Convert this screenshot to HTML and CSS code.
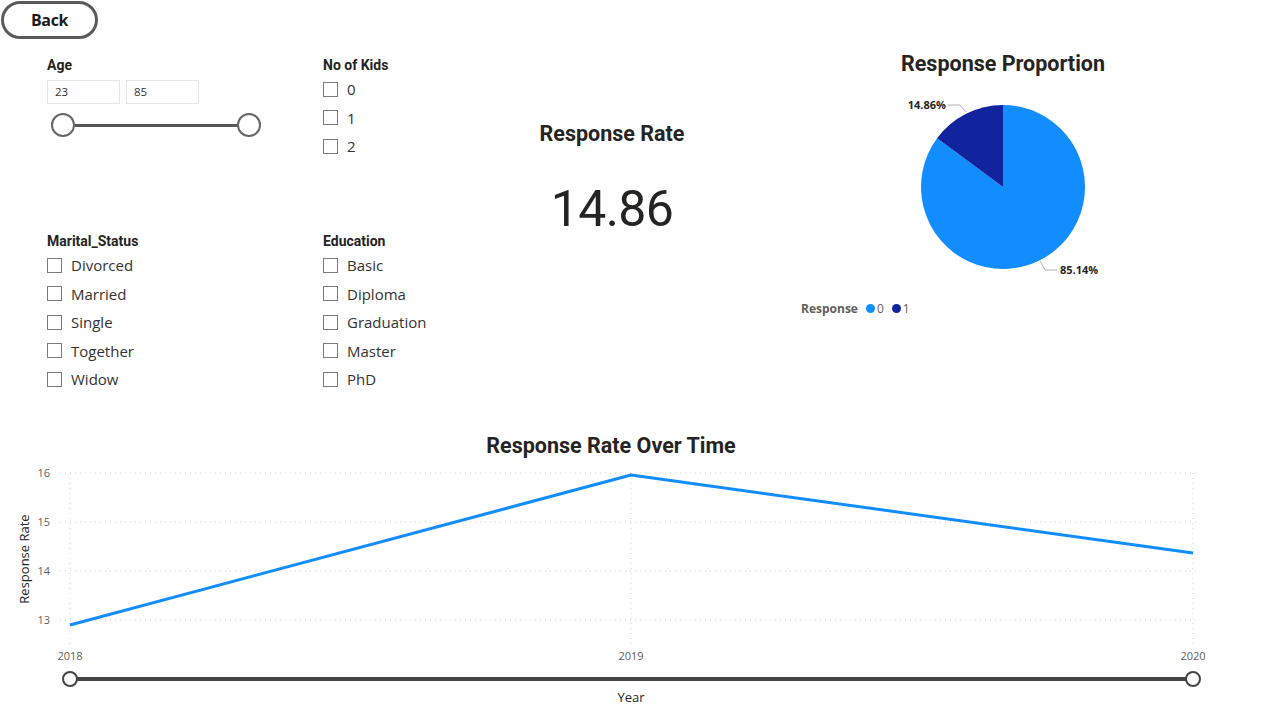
FILE: index.html
```html
<!DOCTYPE html>
<html lang="en">
<head>
<meta charset="utf-8">
<title>Response Dashboard</title>
<link rel="stylesheet" href="styles.css">
</head>
<body>
<div class="page">
  <header class="toolbar">
    <button class="back">Back</button>
  </header>

  <section class="top">
    <div class="filters">
      <div class="slicer">
        <div class="slicer-title">Age</div>
        <div class="range-inputs">
          <div class="range-box">23</div>
          <div class="range-box">85</div>
        </div>
        <div class="range-slider">
          <span class="knob"></span>
          <span class="track"></span>
          <span class="knob"></span>
        </div>
      </div>

      <div class="slicer">
        <div class="slicer-title">No of Kids</div>
        <ul class="checklist">
          <li><span class="box"></span>0</li>
          <li><span class="box"></span>1</li>
          <li><span class="box"></span>2</li>
        </ul>
      </div>

      <div class="slicer">
        <div class="slicer-title">Marital_Status</div>
        <ul class="checklist">
          <li><span class="box"></span>Divorced</li>
          <li><span class="box"></span>Married</li>
          <li><span class="box"></span>Single</li>
          <li><span class="box"></span>Together</li>
          <li><span class="box"></span>Widow</li>
        </ul>
      </div>

      <div class="slicer">
        <div class="slicer-title">Education</div>
        <ul class="checklist">
          <li><span class="box"></span>Basic</li>
          <li><span class="box"></span>Diploma</li>
          <li><span class="box"></span>Graduation</li>
          <li><span class="box"></span>Master</li>
          <li><span class="box"></span>PhD</li>
        </ul>
      </div>
    </div>

    <div class="card">
      <h2 class="visual-title">Response Rate</h2>
      <div class="card-value">14.86</div>
    </div>

    <div class="pie-visual">
      <h2 class="visual-title">Response Proportion</h2>
      <svg class="pie" width="404" height="210" viewBox="0 0 404 210">
        <path d="M202,107 L136.1,58.2 A82,82 0 1 0 202,25 Z" fill="#118DFF"/>
        <path d="M202,107 L202,25 A82,82 0 0 0 136.1,58.2 Z" fill="#12239E"/>
        <polyline points="147,25 159,25 165,32" fill="none" stroke="#b3b3b3" stroke-width="1"/>
        <polyline points="239,181 244,190 256,190" fill="none" stroke="#b3b3b3" stroke-width="1"/>
        <text class="pie-label" x="145" y="29" text-anchor="end">14.86%</text>
        <text class="pie-label" x="259" y="194">85.14%</text>
      </svg>
      <div class="legend">
        <span class="legend-title">Response</span>
        <span class="legend-item"><span class="dot light"></span>0</span>
        <span class="legend-item"><span class="dot dark"></span>1</span>
      </div>
    </div>
  </section>

  <section class="trend">
    <h2 class="visual-title">Response Rate Over Time</h2>
    <svg class="line-chart" width="1262" height="250" viewBox="0 460 1262 250">
      <g class="grid">
        <line x1="60" y1="473" x2="1200" y2="473"/>
        <line x1="60" y1="522" x2="1200" y2="522"/>
        <line x1="60" y1="571" x2="1200" y2="571"/>
        <line x1="60" y1="620" x2="1200" y2="620"/>
        <line x1="70" y1="473" x2="70" y2="648"/>
        <line x1="631" y1="473" x2="631" y2="648"/>
        <line x1="1193" y1="473" x2="1193" y2="648"/>
      </g>
      <g class="ytick">
        <text x="50" y="477">16</text>
        <text x="50" y="526">15</text>
        <text x="50" y="575">14</text>
        <text x="50" y="624">13</text>
      </g>
      <text class="axis-title" transform="translate(29,559) rotate(-90)">Response Rate</text>
      <polyline class="series" points="70,625 631,475 1193,553"/>
      <g class="xtick">
        <text x="70" y="660">2018</text>
        <text x="631" y="660">2019</text>
        <text x="1193" y="660">2020</text>
      </g>
      <line class="range-track" x1="70" y1="679" x2="1193" y2="679"/>
      <circle class="range-knob" cx="70" cy="679" r="7"/>
      <circle class="range-knob" cx="1193" cy="679" r="7"/>
      <text class="axis-title" x="631" y="702" text-anchor="middle">Year</text>
    </svg>
  </section>
</div>
</body>
</html>
```

FILE: styles.css
```css
* {
  box-sizing: border-box;
}

html, body {
  margin: 0;
  padding: 0;
  background: #ffffff;
}

body {
  width: 1262px;
  height: 720px;
  overflow: hidden;
  font-family: "Open Sans", "Noto Sans", sans-serif;
  color: #252423;
}

.page {
  display: flex;
  flex-direction: column;
}

.toolbar {
  height: 40px;
  padding: 1px 0 0 1px;
}

.back {
  width: 97px;
  height: 38px;
  border: 3px solid #5b5b5b;
  border-radius: 19px;
  background: #ffffff;
  font-family: "Open Sans", sans-serif;
  font-weight: 700;
  font-size: 16px;
  color: #1b1b1b;
  padding: 0;
  letter-spacing: -0.4px;
}

.top {
  display: flex;
  height: 394px;
}

.filters {
  margin-left: 47px;
  margin-top: 17px;
  display: grid;
  grid-template-columns: 276px 140px;
  grid-template-rows: 176px auto;
  align-self: flex-start;
}

.slicer-title {
  font-family: "Roboto", sans-serif;
  font-weight: 700;
  font-size: 14px;
  line-height: 16px;
  height: 16px;
  color: #252423;
}

.range-inputs {
  display: flex;
  gap: 6px;
  margin-top: 7px;
}

.range-box {
  width: 73px;
  height: 24px;
  border: 1px solid #e6e6e6;
  font-size: 11.5px;
  line-height: 22px;
  padding-left: 7px;
  color: #333;
}

.range-slider {
  display: flex;
  align-items: center;
  margin-top: 9px;
  margin-left: 4px;
  width: 210px;
}

.knob {
  width: 24px;
  height: 24px;
  border-radius: 50%;
  border: 2px solid #666;
  background: #fff;
  flex: none;
}

.track {
  flex: 1;
  height: 3px;
  background: #575757;
}

.checklist {
  list-style: none;
  margin: 2px 0 0 0;
  padding: 0;
}

.checklist li {
  display: flex;
  align-items: center;
  height: 28.5px;
  font-size: 15px;
  color: #333;
  gap: 9px;
}

.box {
  width: 15px;
  height: 15px;
  border: 1px solid #7a7a7a;
  background: #fff;
  flex: none;
}

.visual-title {
  margin: 0;
  font-family: "Roboto", sans-serif;
  font-weight: 700;
  font-size: 21.5px;
  line-height: 24px;
  color: #252423;
  text-align: center;
}

.card {
  margin-left: 29px;
  width: 240px;
  margin-top: 82px;
  align-self: flex-start;
}

.card-value {
  margin-top: 33px;
  font-family: "Roboto", sans-serif;
  font-size: 50px;
  line-height: 60px;
  text-align: center;
  color: #252423;
  letter-spacing: -0.6px;
}

.pie-visual {
  margin-left: 69px;
  width: 404px;
  margin-top: 12px;
  align-self: flex-start;
}

.pie {
  display: block;
  margin-top: 4px;
}

.pie-label {
  font-family: "Open Sans", sans-serif;
  font-weight: 700;
  font-size: 11px;
  fill: #252423;
}

.legend {
  display: flex;
  align-items: center;
  margin-top: 10px;
  height: 16px;
  font-size: 12px;
  color: #605e5c;
}

.legend-title {
  font-weight: 700;
  margin-right: 8px;
}

.legend-item {
  display: flex;
  align-items: center;
  gap: 2px;
  margin-right: 8px;
}

.dot {
  width: 9px;
  height: 9px;
  border-radius: 50%;
}

.dot.light {
  background: #118DFF;
}

.dot.dark {
  background: #12239E;
}

.trend .visual-title {
  margin-left: -40px;
}

.line-chart {
  display: block;
  margin-top: 2px;
}

.grid line {
  stroke: #cfcfcf;
  stroke-width: 1;
  stroke-dasharray: 1 4;
}

.ytick text {
  font-family: "Open Sans", sans-serif;
  font-size: 11px;
  fill: #605e5c;
  text-anchor: end;
}

.xtick text {
  font-family: "Open Sans", sans-serif;
  font-size: 11px;
  fill: #605e5c;
  text-anchor: middle;
}

.axis-title {
  font-family: "Open Sans", sans-serif;
  font-size: 13px;
  fill: #252423;
  text-anchor: middle;
}

.series {
  fill: none;
  stroke: #118DFF;
  stroke-width: 3;
  stroke-linejoin: round;
}

.range-track {
  stroke: #444;
  stroke-width: 4;
}

.range-knob {
  fill: #fff;
  stroke: #444;
  stroke-width: 2;
}
```
